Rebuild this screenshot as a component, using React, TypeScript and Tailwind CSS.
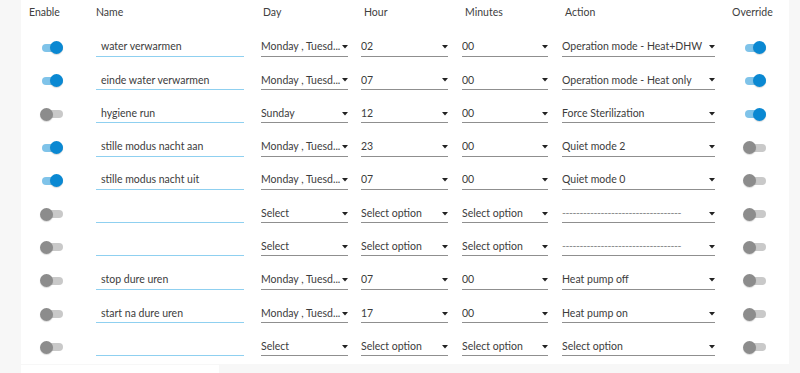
import React from 'react';

type Row = {
  enabled: boolean;
  name: string;
  day: string;
  hour: string;
  minutes: string;
  action: string;
  override: boolean;
};

const DASHES = '----------------------------------';

const rows: Row[] = [
  { enabled: true, name: 'water verwarmen', day: 'Monday , Tuesd...', hour: '02', minutes: '00', action: 'Operation mode - Heat+DHW', override: true },
  { enabled: true, name: 'einde water verwarmen', day: 'Monday , Tuesd...', hour: '07', minutes: '00', action: 'Operation mode - Heat only', override: true },
  { enabled: false, name: 'hygiene run', day: 'Sunday', hour: '12', minutes: '00', action: 'Force Sterilization', override: true },
  { enabled: true, name: 'stille modus nacht aan', day: 'Monday , Tuesd...', hour: '23', minutes: '00', action: 'Quiet mode 2', override: false },
  { enabled: true, name: 'stille modus nacht uit', day: 'Monday , Tuesd...', hour: '07', minutes: '00', action: 'Quiet mode 0', override: false },
  { enabled: false, name: '', day: 'Select', hour: 'Select option', minutes: 'Select option', action: DASHES, override: false },
  { enabled: false, name: '', day: 'Select', hour: 'Select option', minutes: 'Select option', action: DASHES, override: false },
  { enabled: false, name: 'stop dure uren', day: 'Monday , Tuesd...', hour: '07', minutes: '00', action: 'Heat pump off', override: false },
  { enabled: false, name: 'start na dure uren', day: 'Monday , Tuesd...', hour: '17', minutes: '00', action: 'Heat pump on', override: false },
  { enabled: false, name: '', day: 'Select', hour: 'Select option', minutes: 'Select option', action: 'Select option', override: false },
];

function Toggle({ on }: { on: boolean }) {
  return (
    <div className="relative w-[23px] h-[13px]">
      <div
        className={
          'absolute left-[2px] right-0 top-[2.5px] h-[8px] rounded-full ' +
          (on ? 'bg-[#7fc3e9]' : 'bg-[#c9c9c9]')
        }
      />
      <div
        className={
          'absolute top-0 w-[13px] h-[13px] rounded-full shadow-[0_1px_1px_rgba(0,0,0,0.15)] ' +
          (on ? 'right-0 bg-[#0a88d2]' : 'left-0 bg-[#8c8c8c]')
        }
      />
    </div>
  );
}

function Select({ value, width }: { value: string; width: string }) {
  const dashed = value.startsWith('---');
  return (
    <div className={'flex items-center h-[18px] border-b border-[#8f8f8f] ' + width}>
      <span
        className={
          'flex-1 overflow-hidden whitespace-nowrap ' +
          (dashed ? 'text-[#8a8a8a] tracking-[-0.4px] pr-[30px]' : 'text-[#3c3c3c]')
        }
      >
        {value}
      </span>
      <svg width="6" height="4" viewBox="0 0 6 4" className="shrink-0">
        <path d="M0 0 L6 0 L3 3.5 Z" fill="#222" />
      </svg>
    </div>
  );
}

export default function App() {
  return (
    <div
      className="w-[800px] h-[373px] overflow-hidden bg-[#f7f7f7] pl-[21px] text-[10.5px]"
      style={{ fontFamily: 'Lato, "Open Sans", sans-serif' }}
    >
      <div className="w-[768px] bg-white">
        {/* Header */}
        <div className="flex items-center h-[26px] text-[#404040]">
          <div className="w-[75px] pl-[8px]">Enable</div>
          <div className="w-[148px]">Name</div>
          <div className="w-[87px] ml-[17px] pl-[2px]">Day</div>
          <div className="w-[87px] ml-[13px] pl-[3px]">Hour</div>
          <div className="w-[86px] ml-[14px] pl-[3px]">Minutes</div>
          <div className="w-[153px] ml-[14px] pl-[3px]">Action</div>
          <div className="ml-[17px]">Override</div>
        </div>

        {/* Rows */}
        <div className="pt-[5px]">
          {rows.map((r, i) => (
            <div key={i} className="flex items-center h-[33.3px]">
              <div className="w-[75px] pl-[19px]">
                <Toggle on={r.enabled} />
              </div>
              <div className="w-[148px] h-[18px] flex items-center pl-[5px] border-b border-[#8fd0f0] text-[#3c3c3c] whitespace-nowrap">
                {r.name}
              </div>
              <div className="ml-[17px]">
                <Select value={r.day} width="w-[87px]" />
              </div>
              <div className="ml-[13px]">
                <Select value={r.hour} width="w-[87px]" />
              </div>
              <div className="ml-[14px]">
                <Select value={r.minutes} width="w-[86px]" />
              </div>
              <div className="ml-[14px]">
                <Select value={r.action} width="w-[153px]" />
              </div>
              <div className="ml-[28px]">
                <Toggle on={r.override} />
              </div>
            </div>
          ))}
        </div>
      </div>

      {/* next card peeking in */}
      <div className="mt-[1px] w-[198px] h-[20px] bg-white" />
    </div>
  );
}
